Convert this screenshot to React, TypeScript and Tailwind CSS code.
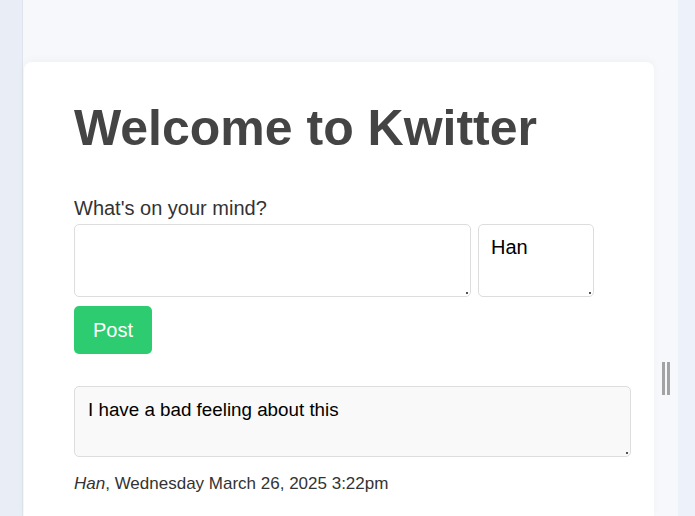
import { useState } from 'react';

function Grip() {
  return <span className="pointer-events-none absolute bottom-[3px] right-[3px] h-[2px] w-[2px] bg-[#555]" />;
}

export default function App() {
  const [draft, setDraft] = useState('');
  const [name, setName] = useState('Han');

  return (
    <div className="flex h-screen overflow-hidden font-['Liberation_Sans',Arial,sans-serif]">
      {/* left rail */}
      <div className="w-[23px] shrink-0 border-r border-[#dfe3ec] bg-[#e9edf6]" />

      {/* main column */}
      <main className="relative min-w-0 flex-1 bg-[#f6f8fc] pl-px pr-[24px] pt-[62px]">
        <div className="h-full rounded-t-lg bg-white px-[50px] pt-[38px] shadow-[0_-2px_8px_rgba(0,0,0,0.03)]">
          <h1 className="text-[50px] font-bold leading-[56px] text-[#444]">Welcome to Kwitter</h1>

          <label className="mt-[40px] block text-[20px] leading-[24px] text-[#333]">What's on your mind?</label>
          <div className="mt-[4px] flex gap-[7px]">
            <div className="relative">
              <textarea
                value={draft}
                onChange={(e) => setDraft(e.target.value)}
                className="block h-[73px] w-[397px] resize-none rounded-[5px] border border-[#ddd] bg-white px-3 py-[10px] text-[20px] text-black outline-none"
              />
              <Grip />
            </div>
            <div className="relative">
              <textarea
                value={name}
                onChange={(e) => setName(e.target.value)}
                className="block h-[73px] w-[116px] resize-none rounded-[5px] border border-[#ddd] bg-white px-3 py-[10px] text-[20px] leading-[24px] text-black outline-none"
              />
              <Grip />
            </div>
          </div>
          <button className="mt-[9px] h-[48px] w-[78px] rounded-[5px] bg-[#2ecc71] text-[20px] text-white">
            Post
          </button>

          <div className="relative mt-[32px] w-[557px]">
            <textarea
              readOnly
              value="I have a bad feeling about this"
              className="block h-[71px] w-full resize-none rounded-[5px] border border-[#ddd] bg-[#f9f9f9] px-[13px] py-[11px] text-[18.8px] leading-[24px] text-black outline-none"
            />
            <Grip />
          </div>
          <p className="mt-[16px] text-[17px] leading-[22px] text-[#333]">
            <em>Han</em>, Wednesday March 26, 2025 3:22pm
          </p>
        </div>

        {/* resize grip */}
        <div className="absolute left-[639px] top-[362px] flex gap-[2px]">
          <span className="block h-[33px] w-[3px] bg-[#a3a3a3]" />
          <span className="block h-[33px] w-[3px] bg-[#a3a3a3]" />
        </div>
      </main>

      {/* right rail */}
      <div className="w-[17px] shrink-0 bg-[#edf1f9]" />
    </div>
  );
}
